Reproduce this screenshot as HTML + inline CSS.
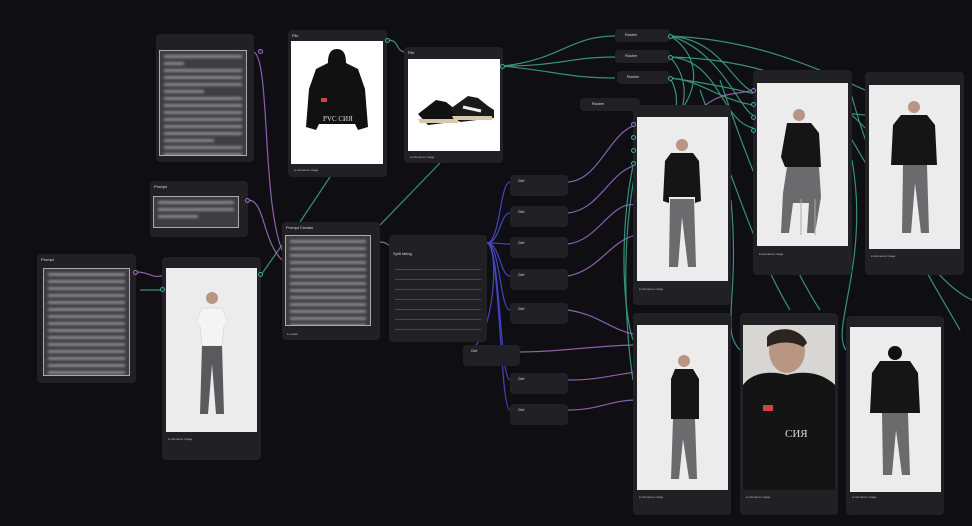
<!DOCTYPE html>
<html><head><meta charset="utf-8"><style>
*{margin:0;padding:0;box-sizing:border-box}
body{width:972px;height:526px;background:#0f0e13;position:relative;overflow:hidden;font-family:"Liberation Sans",sans-serif;color:#ccc}
.n{position:absolute;background:#212125;border-radius:4px}
.t{position:absolute;font-size:4px;color:#ddd;left:4px;top:3px}
.ta{position:absolute;background:#3e3e42;border:1px solid #aaa;overflow:hidden}
.ta i{display:block;height:3px;background:#8a8a8e;margin:4px 4px 0;filter:blur(1.2px)}
.img{position:absolute;background:#ececec;overflow:hidden}
.img svg{width:100%;height:100%;display:block}
.w{background:#fff}
.cap{position:absolute;font-size:3px;color:#bbb}
.d{position:absolute;width:5px;height:5px;border-radius:50%;border:1px solid #3fa88a;background:#123}
.p{border-color:#a36fc4}
.line{position:absolute;height:1px;background:#4a4a4e;left:6px;right:6px}
</style></head><body>
<svg style="position:absolute;left:0;top:0" width="972" height="526" fill="none" stroke-width="1.2">
<g stroke="#3fa88a" opacity=".85">
<path d="M503 66 C560 60 570 36 615 36"/><path d="M503 66 C560 66 570 57 615 57"/><path d="M503 66 C560 72 570 78 615 78"/>
<path d="M387 40 C400 40 395 50 404 52"/><path d="M300 222 L330 177"/><path d="M380 225 L440 163"/>
<path d="M670 36 C720 40 730 80 753 92"/><path d="M670 36 C720 50 740 110 753 115"/><path d="M670 36 C710 60 700 120 633 140"/><path d="M670 57 C720 60 720 120 753 128"/><path d="M670 57 C700 90 680 140 633 155"/><path d="M670 78 C700 80 720 100 753 105"/><path d="M670 78 C690 110 660 160 633 125"/><path d="M670 36 C760 40 820 70 865 90"/><path d="M670 57 C780 60 840 100 865 128"/><path d="M670 78 C760 90 800 110 865 115"/>
<path d="M700 90 C740 200 760 260 790 310"/><path d="M720 80 C760 200 800 280 820 310"/><path d="M850 90 C880 200 920 260 960 330"/><path d="M840 120 C900 220 930 280 972 300"/>
<path d="M640 140 C620 200 620 300 633 340"/><path d="M640 150 C615 250 630 360 633 380"/><path d="M731 200 C740 300 720 330 740 350"/><path d="M852 160 C870 260 830 330 846 350"/>
<path d="M261 275 L282 245"/><path d="M162 290 L140 290"/>
</g>
<g stroke="#a36fc4" opacity=".85">
<path d="M254 52 C270 60 262 200 282 250"/><path d="M248 200 C265 200 262 240 282 260"/><path d="M136 272 C150 272 150 278 162 276"/>
<path d="M380 242 C386 242 386 244 389 245"/>
<path d="M568 182 C600 180 610 130 637 125"/><path d="M568 213 C600 210 610 170 637 165"/><path d="M568 244 C600 240 610 200 637 205"/><path d="M568 276 C600 270 610 240 637 235"/><path d="M568 310 C600 315 610 330 637 335"/><path d="M520 352 C560 352 600 345 637 345"/><path d="M568 380 C600 380 610 375 637 372"/><path d="M568 410 C600 410 610 400 637 400"/><path d="M700 110 C720 90 740 95 753 90"/>
</g>
<g stroke="#4a4ad0" opacity=".9">
<path d="M487 243 C500 243 500 182 510 182"/><path d="M487 243 C500 243 500 213 510 213"/><path d="M487 243 C500 243 500 244 510 244"/><path d="M487 243 C500 243 500 276 510 276"/><path d="M487 243 C500 243 500 310 510 310"/><path d="M487 243 C500 243 495 352 463 352"/><path d="M487 243 C500 243 500 380 510 380"/><path d="M487 243 C500 243 500 410 510 410"/>
</g>
</svg>

<div class="n" style="left:156px;top:34px;width:98px;height:128px"><div class="ta" style="left:3px;top:16px;width:88px;height:106px"><i></i><i style="width:20px"></i><i></i><i></i><i></i><i style="width:40px"></i><i></i><i></i><i></i><i></i><i></i><i></i><i style="width:50px"></i><i></i><i></i><i></i></div></div>
<div class="n" style="left:150px;top:181px;width:98px;height:56px"><div class="t">Prompt</div><div class="ta" style="left:3px;top:15px;width:86px;height:32px"><i></i><i></i><i style="width:40px"></i></div></div>
<div class="n" style="left:37px;top:254px;width:99px;height:129px"><div class="t">Prompt</div><div class="ta" style="left:6px;top:14px;width:87px;height:108px"><i></i><i></i><i></i><i></i><i></i><i></i><i></i><i></i><i></i><i></i><i></i><i></i><i></i><i></i><i></i><i></i></div></div>
<div class="n" style="left:282px;top:222px;width:98px;height:118px"><div class="t">Prompt Creator</div><div class="ta" style="left:3px;top:13px;width:86px;height:91px"><i></i><i></i><i></i><i></i><i></i><i></i><i></i><i></i><i></i><i></i><i></i><i></i><i></i></div><div class="cap" style="left:5px;top:110px">● output</div></div>
<div class="n" style="left:389px;top:235px;width:98px;height:107px"><div class="t" style="top:16px">Split string</div>
<div class="line" style="top:34px"></div><div class="line" style="top:44px"></div><div class="line" style="top:54px"></div><div class="line" style="top:64px"></div><div class="line" style="top:74px"></div><div class="line" style="top:84px"></div><div class="line" style="top:94px"></div></div>

<div class="n" style="left:288px;top:30px;width:99px;height:147px"><div class="t">File</div>
<div class="img w" style="left:3px;top:11px;width:92px;height:123px"><svg viewBox="0 0 92 123"><path d="M46 8c-8 0-9 8-9 14l-12 6-7 20-3 38 10 3 3-6h36l3 6 10-3-3-38-7-20-12-6c0-6-1-14-9-14z" fill="#111"/><rect x="30" y="57" width="6" height="4" fill="#c44"/><text x="32" y="80" font-size="7" fill="#ddd" font-family="Liberation Serif">PVC CИЯ</text></svg></div><div class="cap" style="left:6px;top:138px">● reference image</div></div>
<div class="n" style="left:404px;top:47px;width:99px;height:116px"><div class="t">File</div>
<div class="img w" style="left:4px;top:12px;width:92px;height:92px"><svg viewBox="0 0 92 92"><path d="M10 55l18-14 10 2 10 8 10 2 2 8-40 5z" fill="#111"/><path d="M42 50l18-13 10 2 10 8 6 4v8l-34 4z" fill="#1a1a1a"/><path d="M10 60h40v4H12z M44 57h40v4H46z" fill="#d9c9a8"/><path d="M55 48l18 4" stroke="#eee" stroke-width="3"/></svg></div><div class="cap" style="left:6px;top:108px">● reference image</div></div>

<div class="n" style="left:615px;top:29px;width:55px;height:13px"><div class="t" style="left:10px">Router</div></div>
<div class="n" style="left:615px;top:50px;width:55px;height:13px"><div class="t" style="left:10px">Router</div></div>
<div class="n" style="left:617px;top:71px;width:53px;height:13px"><div class="t" style="left:10px">Router</div></div>
<div class="n" style="left:580px;top:98px;width:60px;height:13px"><div class="t" style="left:12px">Router</div></div>
<div class="n" style="left:510px;top:175px;width:58px;height:21px"><div class="t" style="left:8px">Get</div></div>
<div class="n" style="left:510px;top:206px;width:58px;height:21px"><div class="t" style="left:8px">Get</div></div>
<div class="n" style="left:510px;top:237px;width:58px;height:21px"><div class="t" style="left:8px">Get</div></div>
<div class="n" style="left:510px;top:269px;width:58px;height:21px"><div class="t" style="left:8px">Get</div></div>
<div class="n" style="left:510px;top:303px;width:58px;height:21px"><div class="t" style="left:8px">Get</div></div>
<div class="n" style="left:463px;top:345px;width:57px;height:21px"><div class="t" style="left:8px">Get</div></div>
<div class="n" style="left:510px;top:373px;width:58px;height:21px"><div class="t" style="left:8px">Get</div></div>
<div class="n" style="left:510px;top:404px;width:58px;height:21px"><div class="t" style="left:8px">Get</div></div>

<div class="n" style="left:162px;top:257px;width:99px;height:203px"><div class="img" style="left:4px;top:11px;width:91px;height:164px"><svg viewBox="0 0 91 164"><circle cx="46" cy="30" r="6" fill="#b89683"/><path d="M36 40h20l6 14-4 4-2 20H36l-2-20-4-4z" fill="#f4f4f4" stroke="#ccc" stroke-width=".5"/><path d="M36 78h20l2 68h-8l-4-50-4 50h-8z" fill="#5a5a5c"/></svg></div><div class="cap" style="left:6px;top:180px">● reference image</div></div>

<div class="n" style="left:633px;top:105px;width:98px;height:200px"><div class="img" style="left:4px;top:12px;width:91px;height:164px"><svg viewBox="0 0 91 164"><circle cx="45" cy="28" r="6" fill="#b89683"/><path d="M34 36h22l6 8 2 40-6 2v-6H32v6l-6-2 2-40z" fill="#151515"/><path d="M33 82h24l2 68h-8l-6-50-4 50h-9z" fill="#6b6b6d"/></svg></div><div class="cap" style="left:6px;top:182px">● reference image</div></div>
<div class="n" style="left:753px;top:70px;width:99px;height:205px"><div class="img" style="left:4px;top:13px;width:91px;height:163px"><svg viewBox="0 0 91 163"><circle cx="42" cy="32" r="6" fill="#b89683"/><path d="M30 40h24l8 10 2 34H28l-4-10z" fill="#151515"/><path d="M30 84h32l2 30-6 36h-8l2-30H36l-4 30h-8l2-40z" fill="#6b6b6d"/><path d="M44 116v36M58 116v36" stroke="#aaa"/></svg></div><div class="cap" style="left:6px;top:182px">● reference image</div></div>
<div class="n" style="left:865px;top:72px;width:99px;height:203px"><div class="img" style="left:4px;top:13px;width:91px;height:164px"><svg viewBox="0 0 91 164"><circle cx="45" cy="22" r="6" fill="#b89683"/><path d="M32 30h26l8 10 2 40H22l2-40z" fill="#151515"/><path d="M34 80h24l2 68h-8l-6-50-4 50h-9z" fill="#6b6b6d"/></svg></div><div class="cap" style="left:6px;top:182px">● reference image</div></div>

<div class="n" style="left:633px;top:313px;width:98px;height:202px"><div class="img" style="left:4px;top:12px;width:91px;height:165px"><svg viewBox="0 0 91 165"><circle cx="47" cy="36" r="6" fill="#b89683"/><path d="M38 44h18l6 10v40H34V54z" fill="#151515"/><path d="M36 94h22l2 60h-8l-6-40-4 40h-8z" fill="#6b6b6d"/></svg></div><div class="cap" style="left:6px;top:182px">● reference image</div></div>
<div class="n" style="left:740px;top:313px;width:98px;height:202px"><div class="img" style="left:3px;top:12px;width:92px;height:165px"><svg viewBox="0 0 92 165"><rect width="92" height="165" fill="#d8d6d2"/><ellipse cx="44" cy="26" rx="18" ry="22" fill="#b89683"/><path d="M24 12c8-12 34-10 40 6l-4 4c-10-6-24-6-36 0z" fill="#2a2520"/><path d="M0 60c10-14 30-14 44-10 14-4 34-4 48 10v105H0z" fill="#141414"/><rect x="20" y="80" width="10" height="6" fill="#c44"/><text x="42" y="112" font-size="11" fill="#ddd" font-family="Liberation Serif">CИЯ</text></svg></div><div class="cap" style="left:6px;top:182px">● reference image</div></div>
<div class="n" style="left:846px;top:316px;width:98px;height:199px"><div class="img" style="left:4px;top:11px;width:91px;height:165px"><svg viewBox="0 0 91 165"><circle cx="45" cy="26" r="7" fill="#111"/><path d="M30 34h30l8 12 2 40H20l2-40z" fill="#151515"/><path d="M32 86h26l2 62h-8l-6-45-4 45h-9z" fill="#6b6b6d"/></svg></div><div class="cap" style="left:6px;top:179px">● reference image</div></div>

<div class="d p" style="left:258px;top:49px"></div><div class="d p" style="left:245px;top:198px"></div><div class="d p" style="left:133px;top:270px"></div>
<div class="d" style="left:385px;top:38px"></div><div class="d" style="left:500px;top:64px"></div><div class="d" style="left:258px;top:272px"></div><div class="d" style="left:160px;top:287px"></div>
<div class="d" style="left:668px;top:34px"></div><div class="d" style="left:668px;top:55px"></div><div class="d" style="left:668px;top:76px"></div>
<div class="d p" style="left:751px;top:88px"></div><div class="d" style="left:751px;top:102px"></div><div class="d" style="left:751px;top:115px"></div><div class="d" style="left:751px;top:128px"></div>
<div class="d p" style="left:631px;top:122px"></div><div class="d" style="left:631px;top:135px"></div><div class="d" style="left:631px;top:148px"></div><div class="d" style="left:631px;top:161px"></div>
</body></html>
